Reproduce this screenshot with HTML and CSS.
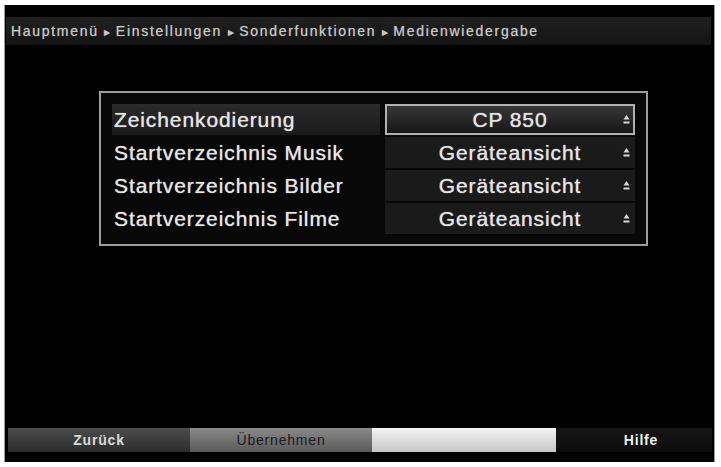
FILE: index.html
```html
<!DOCTYPE html>
<html lang="de">
<head>
    <meta charset="UTF-8">
    <title>Medienwiedergabe</title>
    <link rel="stylesheet" href="styles.css">
</head>
<body>
    <div class="screen">
        <div class="crumbs">Hauptmenü <span class="sep">&#9656;</span> Einstellungen <span class="sep">&#9656;</span> Sonderfunktionen <span class="sep">&#9656;</span> Medienwiedergabe</div>

        <div class="dialog">
            <div class="label sel">Zeichenkodierung</div>
            <div class="value sel"><span></span><span class="val">CP 850</span><svg class="arrow" width="7" height="12" viewBox="0 0 7 12"><polygon points="0.5,5.5 3.5,1 6.5,5.5"/><rect x="0.5" y="7.5" width="6" height="2"/></svg></div>

            <div class="label">Startverzeichnis Musik</div>
            <div class="value"><span></span><span class="val">Geräteansicht</span><svg class="arrow" width="7" height="12" viewBox="0 0 7 12"><polygon points="0.5,5.5 3.5,1 6.5,5.5"/><rect x="0.5" y="7.5" width="6" height="2"/></svg></div>

            <div class="label">Startverzeichnis Bilder</div>
            <div class="value"><span></span><span class="val">Geräteansicht</span><svg class="arrow" width="7" height="12" viewBox="0 0 7 12"><polygon points="0.5,5.5 3.5,1 6.5,5.5"/><rect x="0.5" y="7.5" width="6" height="2"/></svg></div>

            <div class="label">Startverzeichnis Filme</div>
            <div class="value"><span></span><span class="val">Geräteansicht</span><svg class="arrow" width="7" height="12" viewBox="0 0 7 12"><polygon points="0.5,5.5 3.5,1 6.5,5.5"/><rect x="0.5" y="7.5" width="6" height="2"/></svg></div>
        </div>

        <div class="keys">
            <div class="key red">Zurück</div>
            <div class="key green">Übernehmen</div>
            <div class="key yellow"></div>
            <div class="key blue">Hilfe</div>
        </div>
    </div>
</body>
</html>
```

FILE: styles.css
```css
body {
    margin: 0;
    background: #ffffff;
    font-family: "Liberation Sans", Arial, sans-serif;
}
.screen {
    margin: 5px 6px 5px 4px;
    height: 457px;
    box-sizing: border-box;
    background: #000;
    border-left: 1px solid #9a9a9a;
    border-right: 1px solid #9a9a9a;
    padding-top: 12px;
    display: flex;
    flex-direction: column;
}
.crumbs {
    height: 28px;
    margin: 0 3px 0 1px;
    padding-left: 5px;
    background: linear-gradient(#202020, #141414);
    color: #c8c8c8;
    font-size: 14px;
    letter-spacing: 1.7px;
    line-height: 28px;
    white-space: nowrap;
    text-shadow: 0 0 1px rgba(255, 255, 255, 0.5);
}
.sep {
    font-size: 12px;
    letter-spacing: 0;
}
.dialog {
    margin: 46px 0 0 94px;
    width: 549px;
    box-sizing: border-box;
    border: 2px solid #9c9c9c;
    padding: 11px 11px 10px 11px;
    background: #080808;
    display: grid;
    grid-template-columns: 268px 250px;
    grid-auto-rows: 31px;
    column-gap: 5px;
    row-gap: 2px;
}
.label, .value {
    color: #e4e4e4;
    font-size: 21px;
    letter-spacing: 0.9px;
    line-height: 31px;
    white-space: nowrap;
    text-shadow: 0 0 1px rgba(255, 255, 255, 0.8);
}
.label {
    padding-left: 2px;
}
.label.sel {
    background: linear-gradient(#2a2a2a, #1a1a1a);
}
.value {
    background: #1a1a1a;
    display: grid;
    grid-template-columns: 12px 1fr 12px;
    align-items: center;
    box-sizing: border-box;
}
.value.sel {
    background: linear-gradient(#383838, #161616);
    border: 2px solid #b0b0b0;
    line-height: 27px;
    grid-template-columns: 10px 1fr 10px;
}
.val {
    text-align: center;
}
.arrow {
    fill: #d8d8d8;
    justify-self: start;
}
.keys {
    margin: auto 2px 10px 3px;
    height: 24px;
    display: grid;
    grid-template-columns: 182px 182px 184px 1fr;
}
.key {
    font-size: 14px;
    letter-spacing: 0.8px;
    line-height: 24px;
    text-align: center;
    font-weight: bold;
}
.red {
    background: linear-gradient(#4c4c4c, #2c2c2c);
    color: #dadada;
}
.green {
    background: linear-gradient(#8a8a8a, #5a5a5a);
    color: #1c1c1c;
    font-weight: normal;
}
.yellow {
    background: linear-gradient(#f4f4f4, #c6c6c6);
}
.blue {
    background: linear-gradient(#161616, #0c0c0c);
    color: #f0f0f0;
    padding-left: 14px;
}
```
